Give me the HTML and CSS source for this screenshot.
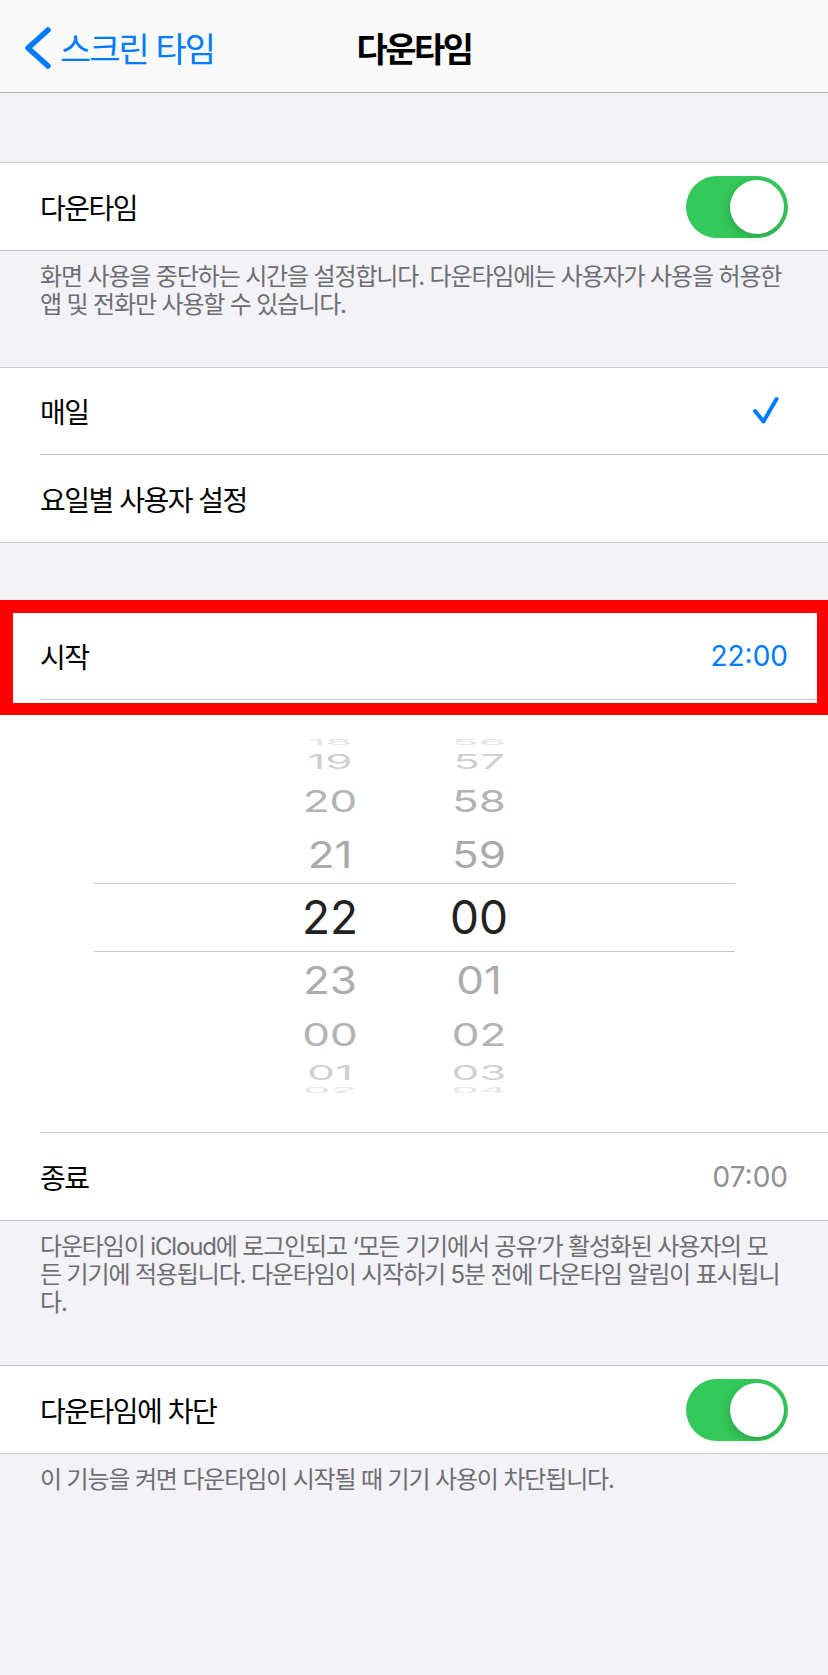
FILE: index.html
```html
<!DOCTYPE html>
<html>
<head>
  <meta charset="utf-8">
  <title>다운타임</title>
  <link rel="stylesheet" href="styles.css">
</head>
<body>
  <nav class="nav-bar">
    <a class="back" href="#">
      <svg class="back-icon" width="28" height="46" viewBox="0 0 28 46">
        <path d="M24 5 L4 23 L24 41" fill="none" stroke="#007aff" stroke-width="5.5" stroke-linecap="round" stroke-linejoin="round"/>
      </svg>
      <span>스크린 타임</span>
    </a>
    <h1 class="nav-title">다운타임</h1>
  </nav>

  <div class="spacer"></div>

  <section class="group">
    <div class="cell">
      <div class="cell-body">
        <span class="label">다운타임</span>
        <span class="switch"></span>
      </div>
    </div>
  </section>
  <p class="group-footer">화면 사용을 중단하는 시간을 설정합니다. 다운타임에는 사용자가 사용을 허용한 앱 및 전화만 사용할 수 있습니다.</p>

  <section class="group">
    <div class="cell">
      <div class="cell-body">
        <span class="label">매일</span>
        <svg class="check" width="34" height="30" viewBox="0 0 34 30">
          <path d="M3 15 L11.5 25.5 L24.5 3" fill="none" stroke="#007aff" stroke-width="4" stroke-linecap="round" stroke-linejoin="round"/>
        </svg>
      </div>
    </div>
    <div class="cell">
      <div class="cell-body">
        <span class="label">요일별 사용자 설정</span>
      </div>
    </div>
  </section>

  <div class="spacer"></div>

  <section class="group">
    <div class="cell">
      <div class="cell-body">
        <span class="label">시작</span>
        <span class="value active">22:00</span>
      </div>
      <span class="highlight"></span>
    </div>
    <div class="picker">
      <div class="picker-wheel">
        <div class="wheel-col">
          <div class="wheel-item"><span>18</span></div>
          <div class="wheel-item"><span>19</span></div>
          <div class="wheel-item"><span>20</span></div>
          <div class="wheel-item"><span>21</span></div>
          <div class="wheel-item selected"><span>22</span></div>
          <div class="wheel-item"><span>23</span></div>
          <div class="wheel-item"><span>00</span></div>
          <div class="wheel-item"><span>01</span></div>
          <div class="wheel-item"><span>02</span></div>
        </div>
        <div class="wheel-col">
          <div class="wheel-item"><span>56</span></div>
          <div class="wheel-item"><span>57</span></div>
          <div class="wheel-item"><span>58</span></div>
          <div class="wheel-item"><span>59</span></div>
          <div class="wheel-item selected"><span>00</span></div>
          <div class="wheel-item"><span>01</span></div>
          <div class="wheel-item"><span>02</span></div>
          <div class="wheel-item"><span>03</span></div>
          <div class="wheel-item"><span>04</span></div>
        </div>
      </div>
    </div>
    <div class="cell">
      <div class="cell-body">
        <span class="label">종료</span>
        <span class="value">07:00</span>
      </div>
    </div>
  </section>
  <p class="group-footer">다운타임이 iCloud에 로그인되고 ‘모든 기기에서 공유’가 활성화된 사용자의 모든 기기에 적용됩니다. 다운타임이 시작하기 5분 전에 다운타임 알림이 표시됩니다.</p>

  <section class="group">
    <div class="cell">
      <div class="cell-body">
        <span class="label">다운타임에 차단</span>
        <span class="switch"></span>
      </div>
    </div>
  </section>
  <p class="group-footer">이 기능을 켜면 다운타임이 시작될 때 기기 사용이 차단됩니다.</p>
</body>
</html>
```

FILE: styles.css
```css
body {
  margin: 0;
  min-height: 1675px;
  background-color: #f2f2f7;
  color: #000;
  font-family: Inter, "Noto Sans CJK KR", sans-serif;
  font-feature-settings: "palt";
}

.nav-bar {
  height: 93px;
  box-sizing: border-box;
  padding-top: 3px;
  background-color: #f9f9fa;
  border-bottom: 1px solid #b2b2b2;
  display: grid;
  grid-template-columns: 1fr auto 1fr;
  align-items: center;
}

.back {
  justify-self: start;
  display: flex;
  align-items: center;
  gap: 8px;
  padding-left: 24px;
  color: #007aff;
  font-size: 34px;
  letter-spacing: -2px;
  text-decoration: none;
}

.back-icon {
  display: block;
}

.nav-title {
  margin: 0;
  font-size: 34px;
  font-weight: 700;
  letter-spacing: -2.5px;
}

.spacer {
  height: 69px;
}

.group {
  background-color: #fff;
  border-top: 1px solid #c8c7cc;
  border-bottom: 1px solid #c8c7cc;
}

.cell {
  position: relative;
  padding-left: 40px;
}

.cell-body {
  height: 87px;
  box-sizing: border-box;
  padding-right: 40px;
  display: flex;
  align-items: center;
  justify-content: space-between;
}

.cell:not(:last-child) .cell-body {
  border-bottom: 1px solid #c8c7cc;
}

.label {
  font-size: 28px;
  letter-spacing: -1.5px;
}

.value {
  font-size: 28px;
  color: #8e8e93;
}

.value.active {
  color: #007aff;
}

.check {
  display: block;
  margin-right: 2px;
}

.switch {
  position: relative;
  flex-shrink: 0;
  width: 102px;
  height: 62px;
  border-radius: 31px;
  background-color: #34c759;
}

.switch::after {
  content: "";
  position: absolute;
  top: 4px;
  right: 4px;
  width: 54px;
  height: 54px;
  border-radius: 50%;
  background-color: #fff;
  box-shadow: -2px 3px 8px rgba(0, 0, 0, 0.14), 0 2px 1px rgba(0, 0, 0, 0.05);
}

/* red annotation frame around the start row */
.highlight {
  position: absolute;
  z-index: 2;
  top: -13px;
  left: 0;
  right: 0;
  bottom: -15px;
  border: solid #ff0000;
  border-width: 13px 11px 12px 13px;
  pointer-events: none;
}

.picker {
  background-color: #fff;
}

.picker::after {
  content: "";
  display: block;
  margin-left: 40px;
  border-top: 1px solid #c8c7cc;
}

.picker-wheel {
  position: relative;
  height: 432px;
  box-sizing: border-box;
  margin: 0 93px 0 94px;
  padding: 35px 0 0 186px;
  display: flex;
  gap: 49px;
  overflow: hidden;
}

.picker-wheel::before {
  content: "";
  position: absolute;
  top: 183px;
  left: 0;
  right: 0;
  height: 69px;
  box-sizing: border-box;
  border-top: 1px solid #c8c7cc;
  border-bottom: 1px solid #c8c7cc;
}

.wheel-col {
  width: 100px;
  display: flex;
  flex-direction: column;
}

.wheel-item {
  display: flex;
  align-items: center;
  justify-content: center;
  font-size: 44px;
  line-height: 1;
  color: #ababab;
}

.wheel-item span {
  display: block;
}

.wheel-item:nth-child(1) { height: 14px; color: #e4e4e4; }
.wheel-item:nth-child(1) span { transform: scaleY(0.18); }
.wheel-item:nth-child(2) { height: 26px; color: #cfcfcf; }
.wheel-item:nth-child(2) span { transform: scaleY(0.45); }
.wheel-item:nth-child(3) { height: 52px; color: #b3b3b3; }
.wheel-item:nth-child(3) span { transform: scaleY(0.69); }
.wheel-item:nth-child(4) { height: 56px; color: #aaaaaa; }
.wheel-item:nth-child(4) span { transform: scaleY(0.82); }
.wheel-item:nth-child(5) { height: 68px; }
.wheel-item:nth-child(6) { height: 58px; color: #acacac; }
.wheel-item:nth-child(6) span { transform: scaleY(0.87); }
.wheel-item:nth-child(7) { height: 50px; color: #b3b3b3; }
.wheel-item:nth-child(7) span { transform: scaleY(0.72); }
.wheel-item:nth-child(8) { height: 26px; color: #d0d0d0; }
.wheel-item:nth-child(8) span { transform: scaleY(0.47); }
.wheel-item:nth-child(9) { height: 10px; color: #e4e4e4; }
.wheel-item:nth-child(9) span { transform: scaleY(0.16); }

.wheel-item.selected {
  font-size: 46px;
  color: #222;
}

.group-footer {
  margin: 0;
  padding: 12px 40px 48px;
  font-size: 24px;
  line-height: 28px;
  letter-spacing: -1.15px;
  color: #6d6d72;
}
```
